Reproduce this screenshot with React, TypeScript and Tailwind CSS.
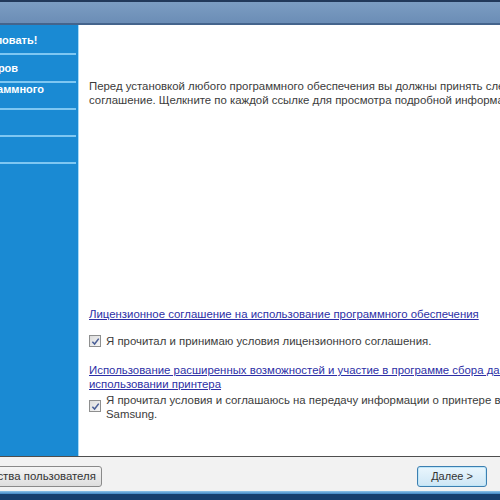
const sideItems = [
  { text: "Добро пожаловать!", offset: "-ml-[70px]", box: "h-[25px] items-center" },
  { text: "Выбор принтеров", offset: "-ml-[81px]", box: "h-[26px] items-center" },
  { text: "Выбор программного", offset: "-ml-[75px]", box: "h-[25px] items-start" },
];

function Checkbox() {
  return (
    <span className="mt-[1px] flex h-[12px] w-[12px] shrink-0 items-center justify-center border border-[#8e8f8f] bg-gradient-to-br from-[#dcdcdc] to-[#f6f6f6]">
      <svg viewBox="0 0 10 10" className="h-[9px] w-[9px]">
        <path d="M1.5 5.2 L4 7.8 L8.6 1.8" fill="none" stroke="#4a5f97" strokeWidth="1.7" />
      </svg>
    </span>
  );
}

export default function App() {
  return (
    <div className="flex h-[500px] w-[500px] flex-col overflow-hidden bg-white font-['Liberation_Sans',Arial,sans-serif] text-[11.4px] text-[#3b3b3b]">
      <div className="h-[2px] bg-[#22395a]" />
      <div className="h-[23px] border-b-2 border-[#44648c] bg-gradient-to-b from-[#7c9dc2] to-[#6b8db6]" />

      <div className="flex h-[431px]">
        <div className="w-[79px] shrink-0 overflow-hidden border-r border-[#a8daf7] bg-[#1a8ad3] pt-[3px] text-[11px] text-white">
          {sideItems.map((item) => (
            <div key={item.text} className="pr-[2px]">
              <div className={`${item.box} flex overflow-hidden leading-[13px]`}>
                <span className={`${item.offset} whitespace-nowrap font-bold`}>{item.text}</span>
              </div>
              <div className="h-[2px] bg-[#7ec7f2]" />
            </div>
          ))}
          <div className="pr-[2px]">
            <div className="h-[25px]" />
            <div className="h-[2px] bg-[#7ec7f2]" />
            <div className="h-[25px]" />
            <div className="h-[2px] bg-[#7ec7f2]" />
          </div>
        </div>

        <div className="flex min-w-0 flex-1 flex-col overflow-hidden pl-[10px] pt-[54px]">
          <p className="whitespace-nowrap leading-[14px]">
            Перед установкой любого программного обеспечения вы должны принять следующее лицензионное
            <br />
            соглашение. Щелкните по каждой ссылке для просмотра подробной информации.
          </p>

          <div className="mt-[200px] flex flex-col">
            <a href="#" className="whitespace-nowrap leading-[14px] text-[#2d2fa6] underline">
              Лицензионное соглашение на использование программного обеспечения
            </a>
            <label className="mt-[13px] flex items-start gap-[5px] whitespace-nowrap leading-[14px]">
              <Checkbox />
              Я прочитал и принимаю условия лицензионного соглашения.
            </label>
            <a href="#" className="mt-[15px] whitespace-nowrap leading-[14px] text-[#2d2fa6] underline">
              Использование расширенных возможностей и участие в программе сбора данных об
              <br />
              использовании принтера
            </a>
            <label className="mt-[2px] flex items-start gap-[5px] whitespace-nowrap leading-[14px]">
              <span className="mt-[6px]">
                <Checkbox />
              </span>
              <span>
                Я прочитал условия и соглашаюсь на передачу информации о принтере в компанию
                <br />
                Samsung.
              </span>
            </label>
          </div>
        </div>
      </div>

      <div className="h-[1px] bg-[#4e4e4e]" />
      <div className="flex h-[34px] items-end justify-between bg-[#f2f2f2] pb-[4px] pr-[13px]">
        <button className="-ml-[52px] h-[21px] rounded-[3px] border border-[#8a8a8a] bg-gradient-to-b from-[#f5f5f5] to-[#dedede] px-[5px] text-[11.4px] text-[#333]">
          Руководства пользователя
        </button>
        <button className="h-[21px] w-[70px] rounded-[3px] border border-[#3c7fb1] bg-gradient-to-b from-[#eaf6fd] to-[#cde6f5] text-[11px] text-[#333] shadow-[inset_0_0_0_1px_#bfe6f8]">
          Далее &gt;
        </button>
      </div>
      <div className="h-[3px] bg-gradient-to-b from-[#8fc3e8] to-[#3f86c4]" />
      <div className="flex-1 bg-[#173f6e]" />
    </div>
  );
}
